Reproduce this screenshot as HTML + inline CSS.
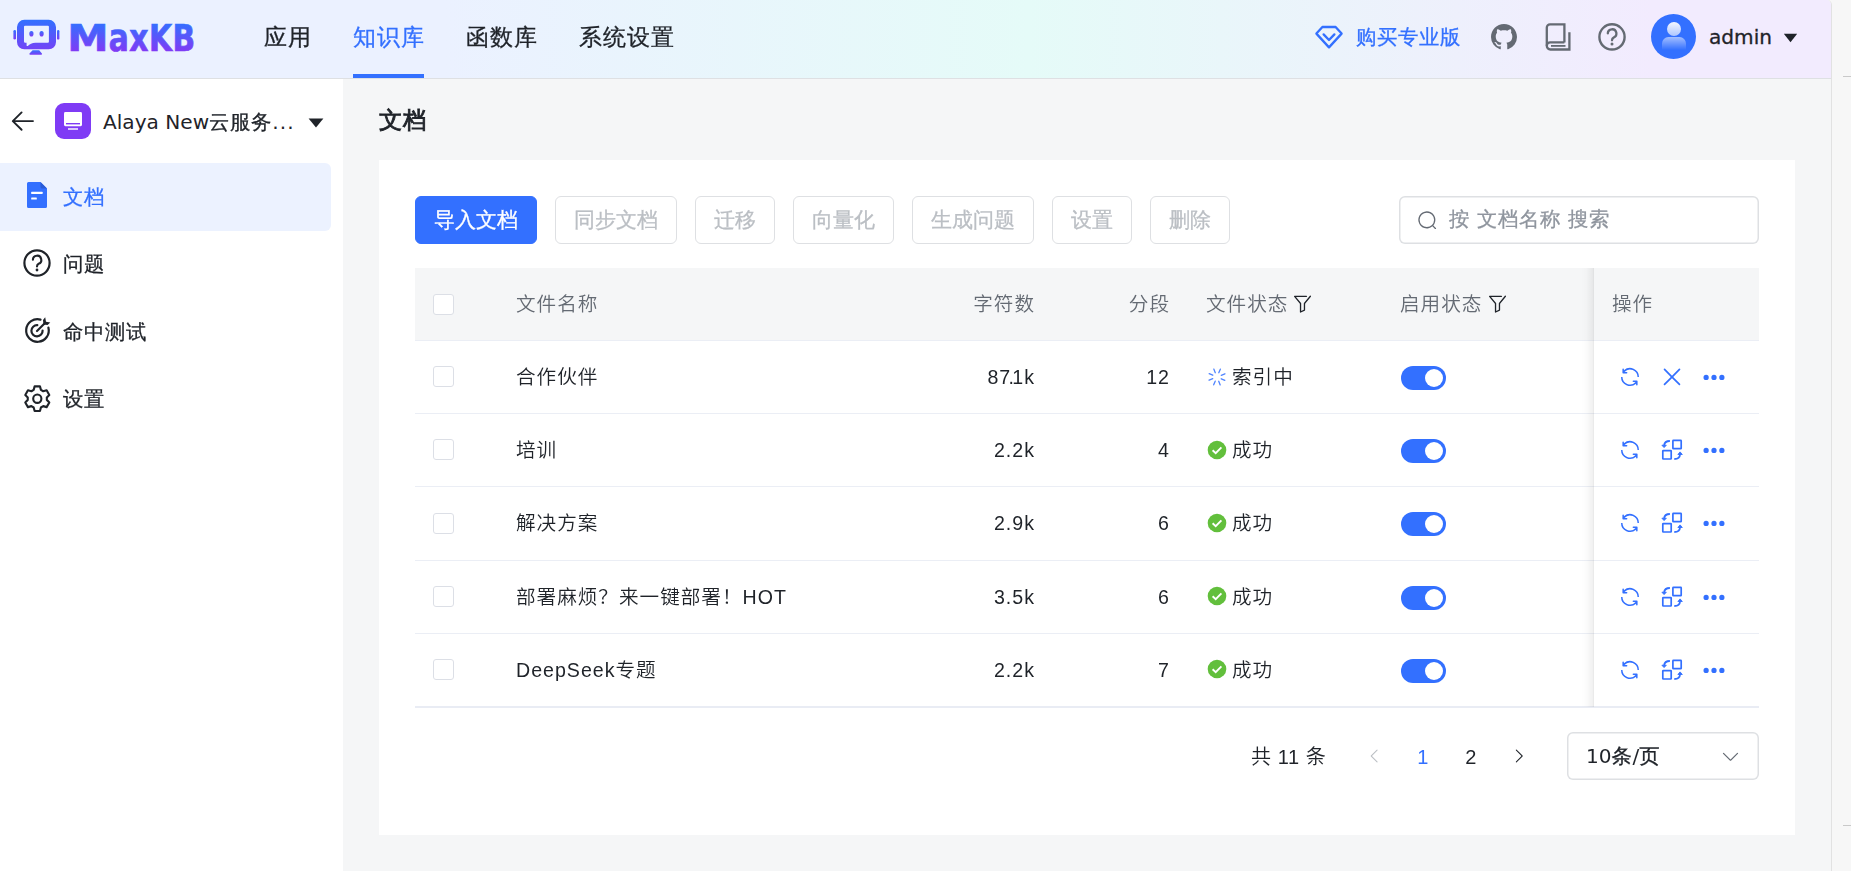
<!DOCTYPE html>
<html lang="zh-CN">
<head>
<meta charset="utf-8">
<title>MaxKB</title>
<style>
*{box-sizing:border-box;margin:0;padding:0}
html,body{width:1851px;height:871px;overflow:hidden;background:#f7f7f7}
body{font-family:"DejaVu Sans","WenQuanYi Zen Hei","Liberation Sans",sans-serif;font-size:20.4px;letter-spacing:.6px;color:#1f2329;position:relative}
.la{font-size:20.1px;letter-spacing:0;-webkit-text-stroke:0}
.nav,.mi span,.btn,#search span,.hr-t,#sidel>div.abs,#psel>span{-webkit-text-stroke:.3px}
.abs{position:absolute}
#app{position:absolute;left:0;top:0;width:1832px;height:871px;background:#f5f6f7;border-top-right-radius:5px;border-right:1px solid #e2e2e2;overflow:hidden}
#edge{position:absolute;left:1831px;top:0;width:1px;height:871px;background:#e3e3e3}
.tick{position:absolute;left:1843px;width:8px;height:1px;background:#c9c9c9}
/* header */
#hdr{position:absolute;left:0;top:0;width:1831px;height:79px;background:linear-gradient(90deg,#ebf1ff 24.34%,#e5fbf8 56.18%,#f2ebfe 90.18%);border-bottom:1px solid #dee0e3}
.nav{position:absolute;top:0;height:78px;line-height:74px;font-size:23px;letter-spacing:1px;color:#1f2329;white-space:nowrap}
.nav.on{color:#3370ff}
.nav.on:after{content:"";position:absolute;left:0;right:1px;bottom:0;height:4px;background:#3370ff}
.hr-t{position:absolute;white-space:nowrap;line-height:30px}
/* sidebar */
#side{position:absolute;left:0;top:79px;width:343px;height:792px;background:#fff}
#sidel{position:absolute;left:0;top:0;width:343px;height:871px}
.mi{position:absolute;left:0;width:331px;height:67.5px;border-radius:0 6px 6px 0}
.mi.on{background:#ecf2ff;color:#3370ff}
.mi span{position:absolute;left:63px;top:.7px;line-height:67px;white-space:nowrap}
.mi svg{position:absolute}
/* main */
#title{position:absolute;left:379px;top:102px;font-size:23.3px;letter-spacing:.7px;font-weight:bold;-webkit-text-stroke:.9px #1f2329;line-height:36px;color:#1f2329}
#card{position:absolute;left:379px;top:160px;width:1416px;height:675px;background:#fff}
.btn{position:absolute;top:196px;height:48px;border:1px solid #dee0e3;border-radius:6px;background:#fff;color:#bbbfc4;font-size:21px;letter-spacing:0;line-height:46px;text-align:center;white-space:nowrap}
.btn.pri{background:#3370ff;border-color:#3370ff;color:#fff}
#search{position:absolute;left:1399px;top:196px;width:360px;height:48px;box-shadow:inset 0 0 0 1.5px #dee0e3;border-radius:6px;background:#fff}
#search span{position:absolute;left:50px;top:0;line-height:46px;color:#8f959e;white-space:pre}
/* table */
.tb{font-family:"Liberation Sans","Noto Sans CJK SC",sans-serif;font-size:20px;letter-spacing:.6px;font-weight:350;position:absolute;left:0;top:0;width:1831px;height:871px;will-change:transform}
#thead{position:absolute;left:415px;top:268px;width:1344px;height:73px;background:#f5f6f7;border-bottom:1px solid #ebeef5}
.row{position:absolute;left:415px;width:1344px;height:73.2px;border-bottom:1px solid #ebeef5}
.row .ck{top:25.3px}
.c{position:absolute;top:0;height:72px;line-height:73px;font-size:19.6px;letter-spacing:1px;white-space:nowrap}
.th .c{color:#646a73}
.ck{position:absolute;left:18px;top:26px;width:21px;height:21px;border:1px solid #dcdfe6;border-radius:3px;background:#fff}
.sw{position:absolute;left:986px;top:25px;width:45px;height:24px;border-radius:12px;background:#3370ff}
.sw:after{content:"";position:absolute;right:3px;top:3px;width:18px;height:18px;border-radius:50%;background:#fff}
#fix{position:absolute;left:1581px;top:268px;width:13px;height:439px;background:linear-gradient(90deg,rgba(0,0,0,0),rgba(0,0,0,.012) 40%,rgba(0,0,0,.06) 92%,rgba(0,0,0,.10))}
.sti{position:absolute;left:791.6px;top:25.5px;width:20px;height:20px}
.ai{position:absolute;top:24px;width:24px;height:24px}
.pg{position:absolute;top:733px;height:48px;line-height:48px;font-size:20px;letter-spacing:.6px;white-space:pre}
#psel{position:absolute;left:1567px;top:732px;width:192px;height:48px;box-shadow:inset 0 0 0 1.5px #dee0e3;border-radius:6px;background:#fff}
#psel>span{font-weight:400;position:absolute;left:19px;top:1px;line-height:46px;white-space:nowrap;font-family:"DejaVu Sans","WenQuanYi Zen Hei",sans-serif;font-size:20.4px;letter-spacing:.6px}
#psel svg{position:absolute;left:152.9px;top:14.2px}
</style>
</head>
<body>
<svg width="0" height="0" style="position:absolute"><defs>
<g id="i-ok"><circle cx="10" cy="10" r="9.3" fill="#62bf3c"/><path d="M5.6 10.2 L8.7 13.2 L14.4 7.4" fill="none" stroke="#fff" stroke-width="1.9"/></g>
<g id="i-load" fill="#3370ff" fill-opacity=".85" transform="translate(-.5 -.5) rotate(-22 10.5 10.5) scale(0.0205078)"><path d="M512 64a32 32 0 0 1 32 32v192a32 32 0 0 1-64 0V96a32 32 0 0 1 32-32zm0 640a32 32 0 0 1 32 32v192a32 32 0 1 1-64 0V736a32 32 0 0 1 32-32zm448-192a32 32 0 0 1-32 32H736a32 32 0 1 1 0-64h192a32 32 0 0 1 32 32zm-640 0a32 32 0 0 1-32 32H96a32 32 0 0 1 0-64h192a32 32 0 0 1 32 32zM195.2 195.2a32 32 0 0 1 45.248 0L376.32 331.008a32 32 0 0 1-45.248 45.248L195.2 240.448a32 32 0 0 1 0-45.248zm452.544 452.544a32 32 0 0 1 45.248 0L828.8 783.552a32 32 0 0 1-45.248 45.248L647.744 692.992a32 32 0 0 1 0-45.248zM828.8 195.264a32 32 0 0 1 0 45.184L692.992 376.32a32 32 0 0 1-45.248-45.248l135.808-135.808a32 32 0 0 1 45.248 0zm-452.544 452.48a32 32 0 0 1 0 45.248L240.448 828.8a32 32 0 0 1-45.248-45.248l135.808-135.808a32 32 0 0 1 45.248 0z"/></g>
<g id="i-x" fill="#3370ff" transform="translate(-1.9 -2) scale(0.02715)"><path d="M764.288 214.592 512 466.88 259.712 214.592a31.936 31.936 0 0 0-45.12 45.12L466.752 512 214.528 764.224a31.936 31.936 0 1 0 45.12 45.184L512 557.184l252.288 252.288a31.936 31.936 0 0 0 45.12-45.12L557.12 512.064l252.288-252.352a31.936 31.936 0 1 0-45.12-45.184z"/></g>
<g id="i-more" fill="#3370ff" transform="scale(0.0234375)"><path d="M176 416a112 112 0 1 1 0 224 112 112 0 0 1 0-224zm336 0a112 112 0 1 1 0 224 112 112 0 0 1 0-224zm336 0a112 112 0 1 1 0 224 112 112 0 0 1 0-224z"/></g>
<g id="i-ref" fill="#3370ff" transform="scale(0.0234375)"><path d="M771.776 794.88A384 384 0 0 1 128 512h64a320 320 0 0 0 555.712 216.448H654.72a32 32 0 1 1 0-64h149.056a32 32 0 0 1 32 32v148.928a32 32 0 1 1-64 0v-50.56zM276.288 295.616h92.992a32 32 0 0 1 0 64H220.16a32 32 0 0 1-32-32V178.56a32 32 0 0 1 64 0v50.56A384 384 0 0 1 896.128 512h-64a320 320 0 0 0-555.776-216.384z"/></g>
<g id="i-mig" stroke="#3370ff" stroke-width="1.7" fill="none" stroke-linejoin="round"><rect x="12.9" y="2.4" width="8.3" height="8.3" rx=".5"/><rect x="2.8" y="12.6" width="8.4" height="8.4" rx=".5"/><path d="M9.9 3 C6.3 3 4.3 5 4.1 7.6" stroke-width="1.8"/><path d="M1.9 7.2 L4.1 9.6 L6.3 7.2 Z" fill="#3370ff" stroke-width=".9"/><path d="M14.3 21 C17.8 21 19.9 19 20.1 16.2" stroke-width="1.8"/><path d="M17.9 16.5 L20.1 13.9 L22.3 16.5 Z" fill="#3370ff" stroke-width=".9"/></g>
</defs></svg>
<div id="app">
  <div id="hdr">
    <svg class="abs" style="left:0;top:0" width="220" height="78" viewBox="0 0 220 78">
      <defs><linearGradient id="lg" x1="0" y1="0" x2="0" y2="1"><stop offset="0" stop-color="#3370ff"/><stop offset="1" stop-color="#7f3bf5"/></linearGradient>
      <linearGradient id="lgt" gradientUnits="userSpaceOnUse" x1="0" y1="23" x2="0" y2="51"><stop offset="0" stop-color="#3370ff"/><stop offset="1" stop-color="#7f3bf5"/></linearGradient></defs>
      <g fill="url(#lgr)">
      <linearGradient id="lgr" gradientUnits="userSpaceOnUse" x1="0" y1="20" x2="0" y2="55"><stop offset="0" stop-color="#3370ff"/><stop offset="1" stop-color="#7f3bf5"/></linearGradient>
      <path fill-rule="evenodd" d="M24.3 19.8 H48.7 A7.3 7.3 0 0 1 56 27.1 V42 A7.3 7.3 0 0 1 48.7 49.3 H24.3 A7.3 7.3 0 0 1 17 42 V27.1 A7.3 7.3 0 0 1 24.3 19.8 Z M25 25.8 A1 1 0 0 0 24 26.8 V41.5 A1.3 1.3 0 0 0 25.3 42.8 H26.6 V45.2 C26.6 46 27.2 46.3 27.8 45.9 C29.6 44.6 32 42.9 35.5 42.8 H47.9 A1 1 0 0 0 48.9 41.8 V26.8 A1 1 0 0 0 47.9 25.8 Z"/>
      <ellipse cx="31.4" cy="33.8" rx="2.1" ry="2.8" fill="url(#lg)"/><ellipse cx="41.6" cy="33.8" rx="2.1" ry="2.8" fill="url(#lg)"/>
      <rect x="13.4" y="30" width="2.6" height="9.6" rx="1.3" fill="url(#lg)"/><rect x="57" y="30" width="2.4" height="9.6" rx="1.2" fill="url(#lg)"/>
      <path d="M32.6 50.2 H39.2 L41.9 53.5 A0.8 0.8 0 0 1 41.3 54.8 H30.1 A0.8 0.8 0 0 1 29.5 53.5 Z" fill="url(#lg)"/>
      </g>
      <text y="50.6" font-family="'DejaVu Sans','Liberation Sans',sans-serif" font-weight="bold" font-size="37" fill="url(#lgt)" stroke="url(#lgt)" stroke-width=".7"><tspan x="67.2" textLength="42" lengthAdjust="spacingAndGlyphs">M</tspan><tspan x="108.8" textLength="87" lengthAdjust="spacingAndGlyphs" font-family="'DejaVu Sans Condensed','DejaVu Sans',sans-serif">axKB</tspan></text>
    </svg>
    <svg class="abs" style="left:1306px;top:14px" width="50" height="48" viewBox="1306 14 50 48"><g fill="none" stroke="#3370ff" stroke-width="2.3" stroke-linejoin="round" stroke-linecap="round"><path d="M1322.4 27 H1335.6 L1341.6 33.6 L1329 47.4 L1316.4 33.6 Z"/><path d="M1323.6 34.4 L1329 40 L1334.4 34.4"/></g></svg>
    <svg class="abs" style="left:1491px;top:24px" width="26" height="26" viewBox="0 0 16 16"><path fill="#646a73" d="M8 0c4.42 0 8 3.58 8 8a8.013 8.013 0 0 1-5.45 7.59c-.4.08-.55-.17-.55-.38 0-.27.01-1.13.01-2.2 0-.75-.25-1.23-.54-1.48 1.78-.2 3.65-.88 3.65-3.95 0-.88-.31-1.59-.82-2.15.08-.2.36-1.02-.08-2.12 0 0-.67-.22-2.2.82-.64-.18-1.32-.27-2-.27-.68 0-1.36.09-2 .27-1.53-1.03-2.2-.82-2.2-.82-.44 1.1-.16 1.92-.08 2.12-.51.56-.82 1.28-.82 2.15 0 3.06 1.86 3.75 3.64 3.95-.23.2-.44.55-.51 1.07-.46.21-1.61.55-2.33-.66-.15-.24-.6-.83-1.23-.82-.67.01-.27.38.01.53.34.19.73.9.82 1.13.16.45.68 1.31 2.69.94 0 .67.01 1.3.01 1.49 0 .21-.15.45-.55.38A7.995 7.995 0 0 1 0 8c0-4.42 3.58-8 8-8Z"/></svg>
    <svg class="abs" style="left:1540px;top:14px" width="40" height="48" viewBox="1540 14 40 48"><g fill="none" stroke="#646a73" stroke-width="2.3"><path d="M1564.4 42.6 V24.3 H1550 A3.2 3.2 0 0 0 1546.8 27.5 V45.8"/><path d="M1564.4 42.4 H1550.2 A3.4 3.4 0 0 0 1546.8 45.8 A3.6 3.6 0 0 0 1550.4 49.5 H1569.4 V32.2"/><path d="M1551 45.9 H1565.5" stroke-width="1.8"/></g></svg>
    <svg class="abs" style="left:1596px;top:21px" width="32" height="32" viewBox="1596 21 32 32"><circle cx="1612" cy="36.9" r="12.6" fill="none" stroke="#646a73" stroke-width="2.4"/><path d="M1607.8 33.4 A4.3 4.3 0 1 1 1613.6 37.6 C1612.3 38.2 1612 38.9 1612 40.3" fill="none" stroke="#646a73" stroke-width="2.3" stroke-linecap="round"/><circle cx="1612" cy="44" r="1.5" fill="#646a73"/></svg>
    <svg class="abs" style="left:1651px;top:14px" width="45" height="45" viewBox="0 0 45 45"><defs><linearGradient id="av1" x1="0" y1="0" x2="0" y2="1"><stop offset="0" stop-color="#fff" stop-opacity=".95"/><stop offset="1" stop-color="#fff" stop-opacity=".6"/></linearGradient><linearGradient id="av2" x1="0" y1="0" x2="0" y2="1"><stop offset="0" stop-color="#fff" stop-opacity=".55"/><stop offset="1" stop-color="#fff" stop-opacity="0"/></linearGradient></defs><circle cx="22.5" cy="22.5" r="22.5" fill="#3370ff"/><circle cx="23" cy="15" r="7" fill="url(#av1)"/><path d="M11 36 V29.5 A6.5 6.5 0 0 1 17.5 23 H28.5 A6.5 6.5 0 0 1 35 29.5 V36 Z" fill="url(#av2)"/></svg>
    <svg class="abs" style="left:1783px;top:33px" width="15" height="10" viewBox="0 0 15 10"><path d="M0.8 0.8 H14.2 L7.5 9.2 Z" fill="#1f2329"/></svg>
    <div class="nav" style="left:264px">应用</div>
    <div class="nav on" style="left:353px">知识库</div>
    <div class="nav" style="left:466px">函数库</div>
    <div class="nav" style="left:579px">系统设置</div>
    <div class="hr-t" style="left:1356px;top:22px;color:#3370ff">购买专业版</div>
    <div class="hr-t la" style="left:1709px;top:22px">admin</div>
  </div>
  <div id="side"></div>
  <div id="sidel">
    <svg class="abs" style="left:8px;top:108px" width="30" height="26" viewBox="8 108 30 26"><path d="M21.6 112.4 L12.8 121.1 L21.6 129.8 M13 121.1 H33" fill="none" stroke="#1f2329" stroke-width="1.9" stroke-linecap="round" stroke-linejoin="round"/></svg>
    <svg class="abs" style="left:55px;top:103px" width="36" height="36" viewBox="55 103 36 36"><rect x="55" y="103" width="36" height="36" rx="9" fill="#7f3bf5"/><rect x="64" y="112" width="18" height="14.2" rx="1.4" fill="#fff"/><rect x="66" y="123" width="14" height="1.4" fill="#7f3bf5"/><rect x="68" y="128.1" width="10" height="1.8" fill="#fff" fill-opacity=".8"/></svg>
    <svg class="abs" style="left:308px;top:117.5px" width="16" height="10" viewBox="0 0 16 10"><path d="M0.6 0.6 H15.4 L8 9.6 Z" fill="#1f2329"/></svg>
    <div class="abs" style="left:103px;top:107px;line-height:30px;white-space:nowrap"><span class="la">Alaya New</span>云服务<span class="la" style="margin-left:.2px;letter-spacing:1.1px">...</span></div>
    <div class="mi on" style="top:163px"><svg style="left:27px;top:19px" width="20" height="26" viewBox="0 0 20 26"><path d="M1.5 0 H13.5 L20 6.5 V24.5 A1.5 1.5 0 0 1 18.5 26 H1.5 A1.5 1.5 0 0 1 0 24.5 V1.5 A1.5 1.5 0 0 1 1.5 0 Z" fill="#3370ff"/><path d="M13.5 0 L20 6.5 H15 A1.5 1.5 0 0 1 13.5 5 Z" fill="#2a5bd6"/><rect x="4.2" y="9.8" width="11.4" height="2.3" rx=".5" fill="#fff"/><rect x="4.2" y="15.4" width="5.6" height="2.2" rx=".5" fill="#fff"/></svg><span>文档</span></div>
    <div class="mi" style="top:230.5px"><svg style="left:22.1px;top:17.8px" width="30" height="30" viewBox="0 0 30 30"><circle cx="15" cy="15" r="12.6" fill="none" stroke="#1f2329" stroke-width="2.2"/><path d="M10.9 11.8 A4.2 4.2 0 1 1 16.6 15.8 C15.3 16.4 15 17.1 15 18.4" fill="none" stroke="#1f2329" stroke-width="2.1" stroke-linecap="round"/><circle cx="15" cy="22" r="1.4" fill="#1f2329"/></svg><span>问题</span></div>
    <div class="mi" style="top:298px"><svg style="left:21.6px;top:16.5px" width="30" height="30" viewBox="0 0 30 30"><g fill="none" stroke="#1f2329" stroke-width="2.2" stroke-linecap="round"><path d="M18.5 4.6 A11.3 11.3 0 1 0 26.4 12.6"/><path d="M15.3 10.2 A5.6 5.6 0 1 0 20.6 15.5"/><path d="M15 16 L22.5 8.5"/></g><path d="M21 5 L23.2 2.2 L24 6.8 L28.3 7.6 L25.5 10 L21.4 9.6 Z" fill="#1f2329"/></svg><span>命中测试</span></div>
    <div class="mi" style="top:365.5px"><svg style="left:22.7px;top:18.3px" width="28.6" height="29.4" preserveAspectRatio="none" viewBox="0 0 30 30"><g fill="none" stroke="#1f2329" stroke-width="2.2" stroke-linejoin="round"><path d="M12.2 2.4 H17.8 L18.8 6 L21.2 7.4 L24.8 6.4 L27.6 11.2 L25 13.8 V16.2 L27.6 18.8 L24.8 23.6 L21.2 22.6 L18.8 24 L17.8 27.6 H12.2 L11.2 24 L8.8 22.6 L5.2 23.6 L2.4 18.8 L5 16.2 V13.8 L2.4 11.2 L5.2 6.4 L8.8 7.4 L11.2 6 Z"/><circle cx="15" cy="15" r="4.3"/></g></svg><span>设置</span></div>
  </div>
  <div id="title">文档</div>
  <div id="card"></div>
  <div class="btn pri" style="left:415px;width:122px">导入文档</div>
  <div class="btn" style="left:555px;width:122px">同步文档</div>
  <div class="btn" style="left:695px;width:80px">迁移</div>
  <div class="btn" style="left:793px;width:101px">向量化</div>
  <div class="btn" style="left:912px;width:122px">生成问题</div>
  <div class="btn" style="left:1052px;width:80px">设置</div>
  <div class="btn" style="left:1150px;width:80px">删除</div>
  <div id="search"><svg class="abs" style="left:18px;top:14.1px" width="21" height="21" viewBox="0 0 1024 1024"><path d="m795.904 750.72 124.992 124.928a32 32 0 0 1-45.248 45.248L750.656 795.904a416 416 0 1 1 45.248-45.248zM480 832a352 352 0 1 0 0-704 352 352 0 0 0 0 704z" fill="#646a73"/></svg><span>按 文档名称 搜索</span></div>
  <div class="tb">
    <div id="thead" class="th">
      <i class="ck"></i>
      <div class="c" style="left:101px">文件名称</div>
      <div class="c" style="right:724px">字符数</div>
      <div class="c" style="right:589px">分段</div>
      <div class="c" style="left:791px">文件状态</div><svg class="abs" style="left:877.3px;top:25.1px" width="21" height="21" viewBox="0 0 1024 1024"><path d="M384 523.392V928a32 32 0 0 0 46.336 28.608l192-96A32 32 0 0 0 640 832V523.392l280.768-343.104a32 32 0 1 0-49.536-40.576l-288 352A32 32 0 0 0 576 512v300.224l-128 64V512a32 32 0 0 0-7.232-20.288L195.52 192H704a32 32 0 1 0 0-64H128a32 32 0 0 0-24.768 52.288z" fill="#1f2329"/></svg>
      <div class="c" style="left:985px">启用状态</div><svg class="abs" style="left:1072.2px;top:25.1px" width="21" height="21" viewBox="0 0 1024 1024"><path d="M384 523.392V928a32 32 0 0 0 46.336 28.608l192-96A32 32 0 0 0 640 832V523.392l280.768-343.104a32 32 0 1 0-49.536-40.576l-288 352A32 32 0 0 0 576 512v300.224l-128 64V512a32 32 0 0 0-7.232-20.288L195.52 192H704a32 32 0 1 0 0-64H128a32 32 0 0 0-24.768 52.288z" fill="#1f2329"/></svg>
      <div class="c" style="left:1197px">操作</div>
    </div>
    <div class="row" style="top:341.0px">
      <i class="ck"></i>
      <div class="c" style="left:101px">合作伙伴</div>
      <div class="c" style="right:724px">87<span style="margin:0 -2.7px">.</span>1k</div>
      <div class="c" style="right:589px">12</div>
      <svg class="sti" viewBox="0 0 20 20"><use href="#i-load"/></svg><div class="c" style="left:817px">索引中</div>
      <i class="sw"></i>
      <svg class="ai" style="left:1203px" viewBox="0 0 24 24"><use href="#i-ref"/></svg>
      <svg class="ai" style="left:1245px" viewBox="0 0 24 24"><use href="#i-x"/></svg>
      <svg class="ai" style="left:1287px" viewBox="0 0 24 24"><use href="#i-more"/></svg>
    </div>
    <div class="row" style="top:414.2px">
      <i class="ck"></i>
      <div class="c" style="left:101px">培训</div>
      <div class="c" style="right:724px">2.2k</div>
      <div class="c" style="right:589px">4</div>
      <svg class="sti" viewBox="0 0 20 20"><use href="#i-ok"/></svg><div class="c" style="left:817px">成功</div>
      <i class="sw"></i>
      <svg class="ai" style="left:1203px" viewBox="0 0 24 24"><use href="#i-ref"/></svg>
      <svg class="ai" style="left:1245px" viewBox="0 0 24 24"><use href="#i-mig"/></svg>
      <svg class="ai" style="left:1287px" viewBox="0 0 24 24"><use href="#i-more"/></svg>
    </div>
    <div class="row" style="top:487.4px">
      <i class="ck"></i>
      <div class="c" style="left:101px">解决方案</div>
      <div class="c" style="right:724px">2.9k</div>
      <div class="c" style="right:589px">6</div>
      <svg class="sti" viewBox="0 0 20 20"><use href="#i-ok"/></svg><div class="c" style="left:817px">成功</div>
      <i class="sw"></i>
      <svg class="ai" style="left:1203px" viewBox="0 0 24 24"><use href="#i-ref"/></svg>
      <svg class="ai" style="left:1245px" viewBox="0 0 24 24"><use href="#i-mig"/></svg>
      <svg class="ai" style="left:1287px" viewBox="0 0 24 24"><use href="#i-more"/></svg>
    </div>
    <div class="row" style="top:560.6px">
      <i class="ck"></i>
      <div class="c" style="left:101px">部署麻烦？来一键部署！HOT</div>
      <div class="c" style="right:724px">3.5k</div>
      <div class="c" style="right:589px">6</div>
      <svg class="sti" viewBox="0 0 20 20"><use href="#i-ok"/></svg><div class="c" style="left:817px">成功</div>
      <i class="sw"></i>
      <svg class="ai" style="left:1203px" viewBox="0 0 24 24"><use href="#i-ref"/></svg>
      <svg class="ai" style="left:1245px" viewBox="0 0 24 24"><use href="#i-mig"/></svg>
      <svg class="ai" style="left:1287px" viewBox="0 0 24 24"><use href="#i-more"/></svg>
    </div>
    <div class="row" style="top:633.8px">
      <i class="ck"></i>
      <div class="c" style="left:101px">DeepSeek专题</div>
      <div class="c" style="right:724px">2.2k</div>
      <div class="c" style="right:589px">7</div>
      <svg class="sti" viewBox="0 0 20 20"><use href="#i-ok"/></svg><div class="c" style="left:817px">成功</div>
      <i class="sw"></i>
      <svg class="ai" style="left:1203px" viewBox="0 0 24 24"><use href="#i-ref"/></svg>
      <svg class="ai" style="left:1245px" viewBox="0 0 24 24"><use href="#i-mig"/></svg>
      <svg class="ai" style="left:1287px" viewBox="0 0 24 24"><use href="#i-more"/></svg>
    </div>
    <div class="pg" style="left:1251px">共 11 条</div>
    <svg class="abs" style="left:1366.4px;top:747.1px" width="18" height="18" viewBox="0 0 1024 1024"><path d="M609.408 149.376 277.76 489.6a32 32 0 0 0 0 44.672l331.648 340.352a29.12 29.12 0 0 0 41.728 0 30.592 30.592 0 0 0 0-42.752L339.264 511.936l311.872-319.872a30.592 30.592 0 0 0 0-42.688 29.12 29.12 0 0 0-41.728 0z" fill="#bbbfc4"/></svg>
    <div class="pg" style="left:1399px;width:48px;text-align:center;color:#3370ff;font-weight:500">1</div>
    <div class="pg" style="left:1447px;width:48px;text-align:center">2</div>
    <svg class="abs" style="left:1510.3px;top:747.1px" width="18" height="18" viewBox="0 0 1024 1024"><path d="M340.864 149.312a30.592 30.592 0 0 0 0 42.752L652.736 512 340.864 831.872a30.592 30.592 0 0 0 0 42.752 29.12 29.12 0 0 0 41.728 0L714.24 534.336a32 32 0 0 0 0-44.672L382.592 149.376a29.12 29.12 0 0 0-41.728 0z" fill="#1f2329"/></svg>
    <div id="psel"><span><span class="la">10</span>条<span class="la">/</span>页</span><svg width="21" height="21" viewBox="0 0 1024 1024"><path d="M831.872 340.864 512 652.672 192.128 340.864a30.592 30.592 0 0 0-42.752 0 29.12 29.12 0 0 0 0 41.6L489.664 714.24a32 32 0 0 0 44.672 0l340.288-331.712a29.12 29.12 0 0 0 0-41.728 30.592 30.592 0 0 0-42.752 0z" fill="#646a73"/></svg></div>
    <div class="abs" style="left:415px;top:706px;width:1344px;height:2px;background:#e9ecf4"></div>
    <div id="fix"></div>
  </div>
</div>
<div class="tick" style="top:76px"></div>
<div class="tick" style="top:825px"></div>
</body>
</html>
